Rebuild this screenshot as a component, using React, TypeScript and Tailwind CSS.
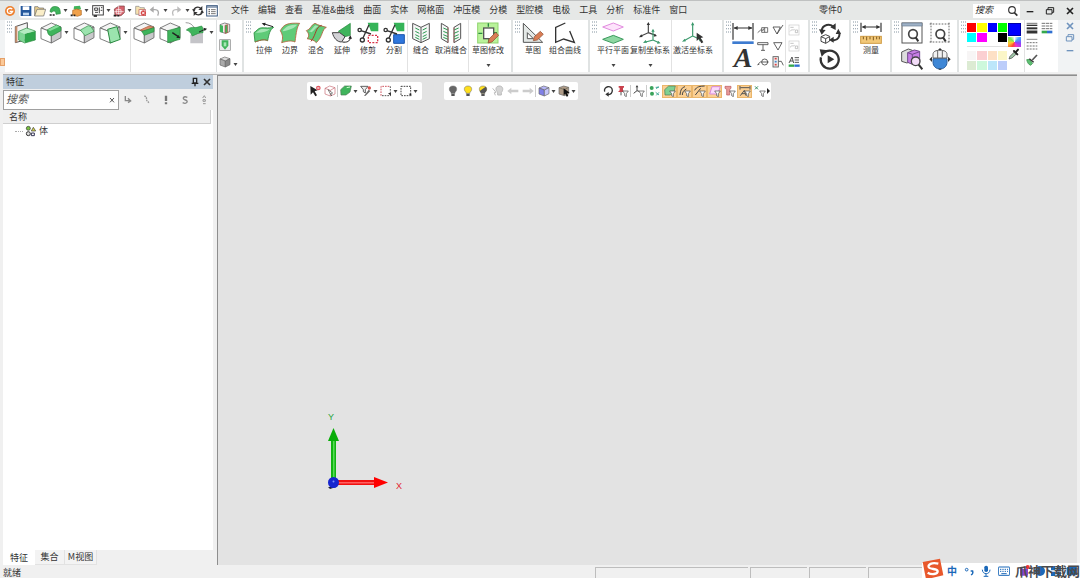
import React from "react";

type Kids = { children?: React.ReactNode };

/* ---------- drawing helpers ---------- */

const G = "#3fb45c";
const GL = "#9be3ae";
const K = "#333";

/* 22px ribbon drawing on a 66 unit grid */
function Big({ children }: Kids) {
  return (
    <svg className="size-[22px] shrink-0" viewBox="0 0 66 66" fill="none" strokeWidth="3" aria-hidden="true">
      {children}
    </svg>
  );
}

/* 12px toolbar drawing on a 36 unit grid */
function Small({ children }: Kids) {
  return (
    <svg className="size-3 shrink-0" viewBox="0 0 36 36" fill="none" strokeWidth="3" aria-hidden="true">
      {children}
    </svg>
  );
}

function Caret() {
  return (
    <svg className="h-[3px] w-[5px] shrink-0" viewBox="0 0 10 6" aria-hidden="true">
      <path d="M1 0h8L5 6z" fill="#444" />
    </svg>
  );
}

function Grip() {
  const cells = [0, 1, 2].flatMap((x) => [0, 1, 2, 3].map((y) => [x, y]));
  return (
    <div className="w-[7px] shrink-0 pt-px pl-0.5">
      <svg className="h-3 w-[5px]" viewBox="0 0 15 36" aria-hidden="true">
        {cells.map(([x, y]) => (
          <rect key={`${x}-${y}`} x={x * 6} y={y * 10 + 1} width="3" height="4" fill="#a4b0ba" />
        ))}
      </svg>
    </div>
  );
}

const Box = ({ top = "#f4f4f4", left = "#fff", right = "#c9c9cb", edge = "#666" }) => (
  <g stroke={edge} strokeLinejoin="round" strokeWidth="2.5">
    <path d="M3 18L34 3l29 12-29 15z" fill={top} />
    <path d="M3 18l31 12v33L3 50z" fill={left} />
    <path d="M34 30l29-15v32L34 63z" fill={right} />
  </g>
);

const Funnel = () => <path d="M17 18h17l-6 8v9l-5-3v-6z" fill="#fff" stroke="#444" strokeWidth="2" />;
const Pointer = () => <path d="M4 3l22 13-9 3 7 12-5 3-7-12-7 7z" fill="#222" />;

/* ---------- ribbon drawings ---------- */

const big = {
  extrude: (
    <Big>
      <path d="M4 14L40 2v50L4 62z" fill="#f3f3f3" stroke="#555" />
      <path d="M4 14v48l6-2V12z" fill="#c98f6b" />
      <path d="M14 28l24-10 26 9-32 9z" fill="#b6ecc2" />
      <path d="M14 28l18 8v26l-18-8z" fill="#7fd695" />
      <path d="M32 36l32-9v27l-32 9z" fill="#2fa64b" />
      <path d="M14 28l24-10 26 9v27l-32 9-18-9z" stroke="#2a8b40" strokeWidth="2" />
    </Big>
  ),
  fillet: (
    <Big>
      <Box />
      <path d="M22 23L50 9l13 7v10L36 41c-10 2-14-8-14-18z" fill={G} stroke="#2a8b40" strokeWidth="2" />
      <path d="M24 23L50 10l8 4-28 13z" fill="#86dd9b" />
    </Big>
  ),
  chamfer: (
    <Big>
      <Box />
      <path d="M22 24L46 11l8 3 9 14-27 13z" fill={GL} stroke="#2a8b40" strokeWidth="2" />
    </Big>
  ),
  draft: (
    <Big>
      <Box />
      <path d="M26 22l28-8 10 38-30 11z" fill={GL} stroke="#2a8b40" />
    </Big>
  ),
  shell: (
    <Big>
      <Box />
      <path d="M22 24L48 12l15 4-29 11z" fill="#d98c6c" stroke="#b0532f" strokeWidth="2" />
      <path d="M26 28l37-11v12L34 40z" fill={G} stroke="#2a8b40" strokeWidth="2" />
    </Big>
  ),
  offset: (
    <Big>
      <Box />
      <path d="M26 26l37-10v36L26 62z" fill={G} stroke="#2a8b40" strokeWidth="2" />
      <path d="M40 32l18 12" stroke="#222" strokeWidth="4" />
      <path d="M64 48l-12 0 6-9z" fill="#222" />
    </Big>
  ),
  replace: (
    <Big>
      <path d="M16 38l38-8v34H16z" fill="#c4c4c8" />
      <path d="M2 2c14 0 20 6 26 16" stroke="#888" strokeWidth="2.5" />
      <path d="M4 24c14-12 26-6 32-8l14-4c6 8 4 14 4 20-14 0-18 4-32 10C18 32 12 26 4 24z" fill={G} stroke="#2a8b40" strokeWidth="2" />
      <path d="M42 30l18-8" stroke="#222" strokeWidth="3" />
      <path d="M66 20l-11-3 4 10z" fill="#222" />
    </Big>
  ),
  pull: (
    <Big>
      <path d="M3 32C12 26 14 20 22 18c12-2 20 2 40-2-12 8-14 20-18 40-12-6-26 0-38 4z" fill="#5fcb78" stroke="#2a8b40" strokeWidth="2.5" />
      <path d="M8 32c10-6 12-11 20-11 8 0 14 1 22 0-8 9-24 12-42 11z" fill="#a5e6b4" />
      <path d="M6 60c12-4 26-10 38-4" stroke="#b5603c" strokeWidth="2.5" />
      <path d="M60 14L34 6" stroke="#222" />
      <path d="M26 4l12-2-3 10z" fill="#222" />
    </Big>
  ),
  boundary: (
    <Big>
      <path d="M4 26C14 6 28 2 62 4 54 14 52 30 48 60 36 54 22 58 8 62 12 48 12 40 4 26z" fill="#5fcb78" stroke="#b5603c" strokeWidth="2.5" />
      <path d="M10 28C20 12 32 8 54 8 48 18 32 24 10 28z" fill="#a5e6b4" />
    </Big>
  ),
  blend: (
    <Big>
      <path d="M4 26c12-2 14-18 26-22 10 6 20 8 34 12-14 6-10 28-30 46-6-8-18-10-28-12 8-6 6-16-2-24z" fill="#5fcb78" stroke="#b5603c" strokeWidth="2.5" />
      <path d="M50 10c-20 6-14 24-32 48" stroke="#a33d2a" strokeWidth="3" />
      <path d="M12 28c10-4 12-14 20-18l8 3c-8 4-12 12-20 18z" fill="#a5e6b4" />
    </Big>
  ),
  extend: (
    <Big>
      <path d="M22 28L58 4v36L42 44z" fill={G} stroke="#2a8b40" strokeWidth="2" />
      <path d="M4 32l22 0 16 12-10 16C18 60 8 48 4 32z" fill="#d2d2d6" stroke="#444" />
      <path d="M34 60c14 2 22-2 24-12" stroke="#222" />
      <path d="M58 40l-6 10h11z" fill="#222" />
    </Big>
  ),
  trim: (
    <Big>
      <path d="M32 2h32v26H42z" fill="#35b458" />
      <rect x="34" y="40" width="28" height="22" stroke="#d8344a" strokeDasharray="6 4" strokeWidth="4" />
      <g stroke={K} strokeWidth="4"><circle cx="8" cy="24" r="5" /><circle cx="16" cy="54" r="6" /><path d="M12 26l30 10M18 48L36 8" /></g>
    </Big>
  ),
  split: (
    <Big>
      <path d="M32 2h32v26H42z" fill="#35b458" />
      <path d="M32 38h32v26H32z" fill="#2f77dd" stroke="#1d56ae" />
      <g stroke={K} strokeWidth="4"><circle cx="8" cy="24" r="5" /><circle cx="16" cy="54" r="6" /><path d="M12 26l30 10M18 48L36 8" /></g>
    </Big>
  ),
  sew: (
    <Big>
      <path d="M8 4l25 12L58 4v46L33 62 8 50z" fill="#f6f6f6" stroke="#555" />
      <path d="M33 16v46" stroke="#555" />
      <path d="M16 18l12 6M16 28l12 6M16 38l12 6M16 46l12 6M50 18l-12 6M50 28l-12 6M50 38l-12 6M50 46l-12 6" stroke="#2a9a50" />
    </Big>
  ),
  unsew: (
    <Big>
      <path d="M4 4l20 12v46L4 50zM62 4L42 16v46l20-12z" fill="#f6f6f6" stroke="#555" />
      <path d="M10 18l14 6M10 28l14 6M10 38l14 6M10 46l14 6M56 18l-14 6M56 28l-14 6M56 38l-14 6M56 46l-14 6" stroke="#2a9a50" />
      <path d="M24 16v46M42 16v46" stroke="#a55" strokeWidth="2" />
    </Big>
  ),
  sketchEdit: (
    <Big>
      <rect x="2" y="3" width="61" height="60" fill="#b9f29a" stroke="#8fd36f" />
      <rect x="20" y="18" width="30" height="32" fill="#fff" stroke="#555" strokeWidth="4" />
      <path d="M34 4v10M4 34h12M36 50v12M50 32h10" stroke="#2a8b40" strokeWidth="4" />
      <path d="M33 63l3-12 20-20 9 9-20 20z" fill="#d97d55" stroke="#8b4a2d" strokeWidth="2" />
    </Big>
  ),
  sketch: (
    <Big>
      <path d="M4 4v57h58z" fill="#e4e8e6" stroke="#555" />
      <path d="M16 32v18h18z" fill="#fff" stroke="#555" />
      <path d="M34 56l3-12 18-16 9 9-18 17z" fill="#d97d55" stroke="#8b4a2d" strokeWidth="2" />
    </Big>
  ),
  curve: (
    <Big>
      <path d="M34 3L5 16v45l24-10 32 10-14-34" stroke="#333" strokeWidth="4" />
    </Big>
  ),
  plane: (
    <Big>
      <path d="M2 15L34 3l30 12-30 12z" fill="#fde3fb" stroke="#e18ade" />
      <path d="M2 52l32-12 30 12-30 12z" fill="#8ed7a2" stroke="#3c9a5d" />
    </Big>
  ),
  copyCsys: (
    <Big>
      <g stroke="#444" strokeWidth="3.5"><path d="M28 6v26L6 42M28 32l22 8" /></g>
      <path d="M28 0l-5 9h10zM0 46l11-1-4-8zM54 42l-7-7-3 9z" fill="#333" />
      <g stroke="#3c9a6d" strokeWidth="3.5"><path d="M42 26v28L20 60M42 54l18 8" /></g>
      <path d="M42 20l-5 9h10zM12 63l12-1-4-8zM65 64l-8-8-3 9z" fill="#3c9a6d" />
    </Big>
  ),
  activeCsys: (
    <Big>
      <g stroke="#3c9a6d" strokeWidth="3.5"><path d="M32 6v36L6 56M32 42l26 12" /></g>
      <path d="M32 0l-5 10h10zM0 59l12-1-4-8zM62 57l-8-8-3 9z" fill="#3c9a6d" />
      <path d="M44 32l20 14-8 2 8 13-6 3-7-13-7 6z" fill="#333" />
    </Big>
  ),
  dimension: (
    <Big>
      <path d="M3 3v50M63 3v50M6 18h54" stroke="#333" strokeWidth="3.5" />
      <path d="M5 18l12-6v12zM61 18l-12-6v12z" fill="#333" />
      <path d="M1 62h64" stroke="#3d7bd0" strokeWidth="8" />
    </Big>
  ),
  regen: (
    <Big>
      <path d="M8 26C10 8 34 2 44 16M40 54c18 4 24-14 20-24" stroke="#333" strokeWidth="6" />
      <path d="M0 22l20 2-12 14zM50 4v20L34 16zM50 36l8-16 8 16zM44 44v18L30 54z" fill="#333" />
      <path d="M6 44l14-6 12 5v14l-12 7-14-6zM6 44l14 6 12-6M20 50v14" stroke="#444" />
    </Big>
  ),
  replay: (
    <Big>
      <path d="M15 14a27 27 0 1 1-9 14" stroke="#333" strokeWidth="7" />
      <path d="M2 4l24 3L8 26z" fill="#333" />
      <path d="M26 22l20 12-20 12z" fill="#333" />
    </Big>
  ),
  measure: (
    <Big>
      <path d="M3 2v28M63 2v28M8 15h50" stroke="#333" strokeWidth="3.5" />
      <path d="M5 15l12-6v12zM61 15l-12-6v12z" fill="#333" />
      <rect x="2" y="43" width="62" height="21" fill="#f3c877" stroke="#cf9c45" />
      <path d="M10 44v8M20 44v11M30 44v8M40 44v11M50 44v8M58 44v8" stroke="#7e5a20" />
    </Big>
  ),
  zoomAll: (
    <Big>
      <rect x="3" y="3" width="60" height="60" fill="#fff" stroke="#555" />
      <path d="M3 3h60v9H3z" fill="#9fb2c7" stroke="#6b7d92" strokeWidth="2" />
      <circle cx="36" cy="36" r="13" stroke="#444" strokeWidth="5" /><path d="M44 46l8 12" stroke="#333" strokeWidth="6" />
    </Big>
  ),
  zoomArea: (
    <Big>
      <path d="M2 6h62M6 2v60M2 60h62M60 2v60" stroke="#666" strokeDasharray="5 4" />
      <circle cx="34" cy="36" r="13" stroke="#444" strokeWidth="5" /><path d="M42 46l8 12" stroke="#333" strokeWidth="6" />
    </Big>
  ),
  viewBox: (
    <Big>
      <path d="M2 12l20-9 12 4v30l-16 8L2 40z" fill="#ddd" stroke="#555" />
      <path d="M20 14l20-8 16 4v30l-22 9-14-6z" fill="#c77de6" stroke="#704a8a" />
      <path d="M20 14l14 5 22-8M34 19v28" stroke="#704a8a" />
      <circle cx="44" cy="40" r="13" fill="#f3dcf8" stroke="#444" strokeWidth="4" /><path d="M53 50l11 14" stroke="#333" strokeWidth="6" />
    </Big>
  ),
  mouse: (
    <Big>
      <path d="M12 32h42v10c0 28-42 28-42 0z" fill="#3e87d6" stroke="#2a5f9e" />
      <path d="M12 30V20c0-10 8-13 21-13s21 3 21 13v10z" fill="#f2f2f2" stroke="#666" />
      <path d="M26 7v23M40 7v23" stroke="#666" />
      <path d="M33 0l-6 6h12zM1 34l8-8v16zM65 34l-8-8v16zM33 66l-6-4h12z" fill="#333" />
    </Big>
  ),
};

/* ---------- small drawings ---------- */

const bulb = (fill: string, half?: boolean) => (
  <Small>
    <path d="M18 3c14 0 13 14 6 19v3H12v-3C5 17 4 3 18 3z" fill={fill} stroke="#666" strokeWidth="1.5" />
    {half && <path d="M8 18L26 5c6 6 3 14-2 17v3H12z" fill="#555" />}
    <path d="M13 26h10v7H13z" fill="#555" />
  </Small>
);
const flat = (fill: string, kids?: React.ReactNode) => (
  <Small>
    <path d="M2 14L14 3h20l-4 18-12 9H3z" fill={fill} stroke="#4c7a54" strokeWidth="2" />
    {kids}
  </Small>
);
const miniBox = (top: string, left: string, right: string) => (
  <Small>
    <g stroke="#666" strokeWidth="2"><path d="M3 9l14-6 16 5-14 7z" fill={top} /><path d="M3 9l16 6v18L3 27z" fill={left} /><path d="M19 15l14-7v18l-14 7z" fill={right} /></g>
  </Small>
);

const sm = {
  logo: <Small><circle cx="18" cy="18" r="15" fill="#ee8130" /><path d="M25 12c-8-5-16 0-15 7 1 8 13 9 16 0H17" stroke="#fff" strokeWidth="4" /></Small>,
  save: <Small><path d="M2 3h32v30H2z" fill="#24589c" /><path d="M8 4h20v11H8z" fill="#fff" /><path d="M9 23h18v8H9z" fill="#bcd4ee" /></Small>,
  open: <Small><path d="M2 33V5h10l3 4h14v5" fill="#e9cf8f" stroke="#666" strokeWidth="2" /><path d="M2 33L9 13h26l-6 20z" fill="#faeec8" stroke="#666" strokeWidth="2" /></Small>,
  part: <Small><path d="M3 20C5 4 15 3 26 6c6 2 8 10 8 20l-13 2c0-8-2-10-8-10l-4 4z" fill={G} stroke="#2a8b40" strokeWidth="2" /><path d="M2 30h6M11 30h6" stroke="#222" strokeWidth="5" /></Small>,
  assembly: <Small><path d="M12 4l18-2 3 10-12 4-10-3z" fill={G} /><path d="M8 16l12-4 14 4v14l-12 4-14-4z" fill="#f0a14a" stroke="#b06a22" strokeWidth="2" /><path d="M2 31h6M11 31h5" stroke="#222" strokeWidth="5" /></Small>,
  drawing: <Small><rect x="2" y="2" width="32" height="28" stroke="#444" strokeWidth="3" /><path d="M8 9h9v7H8zM22 7v18M27 8h4M26 16h5M9 22h9" stroke="#444" strokeWidth="3" /><path d="M5 33h10" stroke="#222" strokeWidth="5" /></Small>,
  cam: <Small><path d="M4 12l14-9h16v20l-10 9H6z" fill="#d6616b" stroke="#7a4040" strokeWidth="2" /><path d="M10 14h14v12H10zM17 3v28M4 20h28" stroke="#fff" strokeWidth="2" /><path d="M2 32h8M13 32h6" stroke="#222" strokeWidth="5" /></Small>,
  folderDel: <Small><path d="M2 28V4h10l3 4h13v20z" fill="#f6e2b0" stroke="#888" strokeWidth="2" /><rect x="12" y="14" width="20" height="18" fill="#fff" stroke="#b55" strokeWidth="2" /><circle cx="25" cy="24" r="8" fill="#d64545" /><path d="M21 20l8 8M29 20l-8 8" stroke="#fff" /></Small>,
  undo: <Small><path d="M26 32c6-12 0-18-8-18H8" stroke="#aaa" strokeWidth="4" /><path d="M2 14L14 4v19z" fill="#aaa" /></Small>,
  redo: <Small><path d="M10 32C4 20 10 14 18 14h10" stroke="#bbb" strokeWidth="4" /><path d="M34 14L22 4v19z" fill="#bbb" /></Small>,
  sync: <Small><path d="M5 17C6 6 20 3 27 11M31 19c-1 11-15 14-22 6" stroke="#333" strokeWidth="4" /><path d="M31 3v13l-12-2zM5 33V20l12 2zM0 13l11 0-5 9zM36 23H25l5-9z" fill="#333" /></Small>,
  list: <Small><rect x="2" y="2" width="32" height="31" fill="#fff" stroke="#3c5a80" strokeWidth="3" /><path d="M2 6h32" stroke="#3c5a80" strokeWidth="3" /><path d="M8 14h3M8 20h3M8 26h3" stroke="#222" strokeWidth="4" /><path d="M15 14h14M15 20h14M15 26h14" stroke="#777" /></Small>,
  shellRed: <Small><path d="M3 8l14-5 15 4v22l-13 5-16-5z" fill="#eee" stroke="#555" strokeWidth="2" /><path d="M3 8l9 3v21l-9-3z" fill={G} /><path d="M18 10l8-2v24l-8 2z" fill={G} stroke="#c44" strokeWidth="2" /></Small>,
  rib: <Small><rect x="2" y="2" width="32" height="32" fill="#e7e9eb" stroke="#888" strokeWidth="2" /><path d="M8 4h20v16l-10 12L8 20z" fill={G} /><path d="M14 10h8v12h-8z" fill="#a5e6b4" /></Small>,
  block: miniBox("#ddd", "#aaa", "#888"),
  pickDel: <Small><Pointer /><circle cx="28" cy="9" r="7" fill="#e0555f" /><path d="M25 6l6 6M31 6l-6 6" stroke="#fff" strokeWidth="2" /></Small>,
  pickBox: <Small><path d="M3 10l14-7 16 5v19l-14 6-16-6zM3 10l16 6 14-8M19 16v17" stroke="#c76b74" strokeWidth="2" /><path d="M12 14l14 10-6 2 3 7z" fill="#fff" stroke="#555" strokeWidth="2" /></Small>,
  face: flat(G, <path d="M20 8l10-2" stroke="#cfc" />),
  filterPen: <Small><path d="M2 4h22l-8 10v10l-6-4v-6z" fill="#eee" stroke="#444" strokeWidth="2.5" /><circle cx="28" cy="9" r="5" fill="#d9534f" /><path d="M12 33L26 14l5 4-14 14z" fill="#666" /></Small>,
  rectRed: <Small><path d="M3 32V4h28" stroke="#cf5560" strokeDasharray="5 3" /><path d="M31 4v28H3" stroke="#555" strokeDasharray="5 3" /><path d="M24 24h9v9" fill="#333" /></Small>,
  rectSel: <Small><rect x="3" y="4" width="29" height="28" stroke="#444" strokeDasharray="5 3" /><path d="M26 26h8v8z" fill="#222" /></Small>,
  bulbOff: bulb("#666"),
  bulbOn: bulb("#ffdf1c"),
  bulbHalf: bulb("#ffe020", true),
  bulbFade: <Small><path d="M22 3c13 0 12 14 6 19v8H17v-8C10 17 9 3 22 3z" fill="#d4d4d4" stroke="#bbb" /><path d="M2 10l10 12-5 1 3 8" stroke="#bbb" /></Small>,
  left: <Small><path d="M1 18l12-10v6h21v8H13v6z" fill="#ccc" /></Small>,
  right: <Small><path d="M35 18L23 8v6H2v8h21v6z" fill="#ccc" /></Small>,
  shade: miniBox("#b6b6f8", "#8080e8", "#c7c7fb"),
  shadePick: <Small><path d="M3 8l14-5 15 4v20l-13 5-16-5z" fill="#b09c88" stroke="#666" strokeWidth="2" /><path d="M3 8l16 6 13-7M19 14v18" stroke="#665" strokeWidth="2" /><path d="M17 10l18 13-8 2 4 8-5 2-4-9-5 4z" fill="#111" /></Small>,
  rotate: <Small><path d="M8 20C3 4 30-2 31 16c0 8-6 13-14 13" stroke="#333" strokeWidth="4" /><path d="M20 21v14l-10-7z" fill="#333" /></Small>,
  pinFilter: <Small><path d="M5 3h16v5h-3v8l5 5H3l5-5V8H5z" fill="#c9414c" /><path d="M12 21v10" stroke="#555" /><Funnel /></Small>,
  axisFilter: <Small><path d="M12 3v14L2 25M12 17l12 4" stroke="#444" strokeWidth="3" /><path d="M12 0l-4 7h8z" fill="#444" /><Funnel /></Small>,
  dots: <Small><circle cx="8" cy="9" r="6" fill="#3aa35b" /><circle cx="9" cy="26" r="6" fill="#3aa35b" /><path d="M20 7h10M22 12l6-8M20 22l10 8M30 22l-8 9" stroke="#4a9" strokeWidth="3" /></Small>,
  faceFilter: flat("#7fd092", <Funnel />),
  curveFilter: <Small><path d="M3 30C5 12 9 8 18 5M10 30c0-8 4-14 12-18" stroke="#444" strokeWidth="3" /><Funnel /></Small>,
  edgeFilter: <Small><path d="M2 16C8 4 18 4 32 3M4 30L20 10" stroke="#444" strokeWidth="3" /><Funnel /></Small>,
  planeFilter: <Small><path d="M9 5h25l-8 22H2z" fill="#fbd9fb" stroke="#d88ad8" /><Funnel /></Small>,
  solidFilter: <Small><path d="M3 4h18v6l-4 3v17H8V13l-5-3z" fill="#e79a9a" stroke="#b9545a" strokeWidth="2" /><Funnel /></Small>,
  dimFilter: <Small><path d="M3 3v11M33 3v11M4 8h28M4 32l12-16 5 16M8 26h10" stroke="#555" strokeWidth="3" /><Funnel /></Small>,
  pointFilter: <Small><path d="M3 4l9 9M12 4l-9 9" stroke="#3a8f63" strokeWidth="3" /><Funnel /></Small>,
  datum: <Small><path d="M2 26l9-8h6M14 11h18v14H14zM23 11v14M17 21l4-8" stroke="#555" strokeWidth="2.5" /></Small>,
  rough: <Small><path d="M3 9h22L15 30zM15 30L33 3" stroke="#444" strokeWidth="2.5" /></Small>,
  tee: <Small><path d="M2 8h31v6H2zM18 14v17M12 31h12" stroke="#444" strokeWidth="2.5" /></Small>,
  tri: <Small><path d="M5 8h25L18 30z" stroke="#444" strokeWidth="2.5" /></Small>,
  balloon: <Small><circle cx="23" cy="18" r="9" stroke="#444" strokeWidth="2.5" /><path d="M2 26l8-8h25M2 26l5-1" stroke="#444" strokeWidth="2.5" /></Small>,
  holes: <Small><rect x="3" y="2" width="16" height="31" fill="#eee" stroke="#555" strokeWidth="2.5" /><path d="M8 8h6" stroke="#d44" strokeWidth="5" /><path d="M8 17h6" stroke="#48c" strokeWidth="5" /><path d="M8 26h6" stroke="#d44" strokeWidth="5" /><path d="M20 16h8l6 12" stroke="#444" strokeWidth="2.5" /></Small>,
  note: <Small><rect x="3" y="3" width="30" height="30" stroke="#ccc" strokeWidth="2" /><path d="M7 10h10M6 22c6-8 10-2 14-6M22 18h7v8h-7z" stroke="#bbb" strokeWidth="2.5" /></Small>,
  style: <Small><path d="M3 21L12 3l5 18M6 15h9M20 5h13M20 12h13M20 19h13" stroke="#333" strokeWidth="2.5" /><path d="M2 29h16" stroke="#35a84c" strokeWidth="7" /><path d="M19 29h16" stroke="#2f6fd0" strokeWidth="7" /></Small>,
  weight: <Small><path d="M2 4h32" stroke="#333" strokeWidth="2" /><path d="M2 10h32" stroke="#333" strokeWidth="4" /><path d="M2 19h32" stroke="#333" strokeWidth="6" /><path d="M2 30h32" stroke="#333" strokeWidth="9" /></Small>,
  lineColor: <Small><path d="M2 4h32M2 12h32M2 20h32" stroke="#555" strokeWidth="2.5" strokeDasharray="10 2" /><path d="M2 30h16" stroke="#35a84c" strokeWidth="8" /><path d="M18 30h16" stroke="#2f6fd0" strokeWidth="8" /></Small>,
  dash: <Small><path d="M2 4h32" stroke="#555" strokeWidth="2" /><path d="M2 14h32M2 24h32M2 33h32" stroke="#555" strokeWidth="2.5" strokeDasharray="6 3" /></Small>,
  brush: <Small><path d="M33 3L19 18" stroke="#555" strokeWidth="5" /><path d="M2 17l8-1 10 12-6 6C8 32 4 26 2 17z" fill="#5fbf74" stroke="#2a8b40" strokeWidth="2" /><path d="M10 14l13 11" stroke="#333" strokeWidth="4" /></Small>,
  dropper: <Small><path d="M3 33l3-8L20 11l6 6-14 13z" fill="#9fc7a8" stroke="#444" strokeWidth="2" /><path d="M18 9l10 10M23 13l7-8" stroke="#222" strokeWidth="6" strokeLinecap="round" /></Small>,
  min: <Small><path d="M8 20h20" stroke="currentColor" strokeWidth="4" /></Small>,
  restore: <Small><path d="M7 14h17v13H7zM12 14V8h17v14h-5" stroke="currentColor" strokeWidth="3" /></Small>,
  close: <Small><path d="M9 9l18 18M27 9L9 27" stroke="currentColor" strokeWidth="5" /></Small>,
  search: <Small><circle cx="15" cy="15" r="10" stroke="#333" strokeWidth="3.5" /><path d="M22 23l9 9" stroke="#333" strokeWidth="5" /></Small>,
  pushpin: <Small><path d="M13 7h10v14H13zM8 22h20M18 22v9" stroke="#222" strokeWidth="4" /></Small>,
  t1: <Small><path d="M10 6v14h14M18 13l8 8-8 5" stroke="#888" strokeWidth="4" /></Small>,
  t2: <Small><path d="M10 6c12 4 2 10 10 16l5 6" stroke="#999" strokeWidth="4" strokeDasharray="5 2" /></Small>,
  t3: <Small><path d="M18 5v16M18 25v6" stroke="#777" strokeWidth="7" /></Small>,
  t4: <Small><path d="M25 10c-12-5-17 5-6 8s4 14-8 8" stroke="#888" strokeWidth="4" /></Small>,
  t5: <Small><path d="M14 12l5-7 4 7M15 17h7v5h-7zM15 29h8" stroke="#999" strokeWidth="3" /></Small>,
  body: <Small><circle cx="10" cy="10" r="6" fill="#7ac142" stroke="#333" strokeWidth="2" /><circle cx="10" cy="26" r="6" fill="#ddd" stroke="#333" /><path d="M19 18l6-11 7 11z" fill="#d8d84a" stroke="#333" strokeWidth="2" /><path d="M19 24h9v8h-9z" fill="#fff" stroke="#335" /></Small>,
};

/* ---------- layout pieces ---------- */

function IconButton({ label, wide, on, children }: Kids & { label: string; wide?: boolean; on?: boolean }) {
  return (
    <button
      type="button"
      aria-label={label}
      className={`flex shrink-0 items-center justify-center ${wide ? "w-[26px] pt-0.5" : on ? "h-[13px] w-[15px] border border-[#eab66b] bg-[#fbcf93]" : "w-[15px]"}`}
    >
      {children}
    </button>
  );
}

function Group({ children }: Kids) {
  return <section className="flex shrink-0 border-r-2 border-[#e0e3e3] bg-white">{children}</section>;
}

const Sep = () => <i className="w-px shrink-0 self-stretch bg-[#e2e2e2]" />;

const toolWidth = { sm: "w-[26px]", md: "w-8", lg: "w-[38px]" };

function Tool({ icon, text, size = "sm", menu }: { icon: React.ReactNode; text: string; size?: "sm" | "md" | "lg"; menu?: boolean }) {
  return (
    <button type="button" className={`flex shrink-0 flex-col items-center pt-0.5 ${toolWidth[size]}`}>
      {icon}
      <span className="text-[8px] leading-3 whitespace-nowrap">{text}</span>
      {menu && <span className="pt-2"><Caret /></span>}
    </button>
  );
}

const menus = ["文件", "编辑", "查看", "基准&曲线", "曲面", "实体", "网格面", "冲压模", "分模", "型腔模", "电极", "工具", "分析", "标准件", "窗口"];

function TitleBar() {
  return (
    <header className="flex h-5 shrink-0 items-center border-t border-[#bfc1c1] bg-[#e6e8e7]">
      <span className="flex w-[19px] justify-center">{sm.logo}</span>
      <div className="flex h-[15px] w-[200px] shrink-0 items-center justify-between rounded-sm bg-white px-px">
        {sm.save}{sm.open}{sm.part}<Caret />{sm.assembly}<Caret />{sm.drawing}<Caret />{sm.cam}<Caret />
        {sm.folderDel}{sm.undo}<Caret />{sm.redo}<Caret />{sm.sync}{sm.list}
      </div>
      <nav className="flex gap-[9px] pb-px pl-3 whitespace-nowrap">
        {menus.map((m) => <button type="button" key={m}>{m}</button>)}
      </nav>
      <h1 className="ml-auto pr-[131px] pb-px whitespace-nowrap">零件0</h1>
      <label className="flex h-[14px] w-[47px] items-center bg-white pl-0.5">
        <input aria-label="搜索命令" placeholder="搜索" className="w-8 pb-px italic outline-none placeholder:text-[#222]" />
        {sm.search}
      </label>
      <div className="flex gap-2 pr-1 pl-1 text-[#222]">
        <button type="button" aria-label="最小化">{sm.min}</button>
        <button type="button" aria-label="还原">{sm.restore}</button>
        <button type="button" aria-label="关闭">{sm.close}</button>
      </div>
    </header>
  );
}

const swatches = [
  "bg-[#ff0000]", "bg-[#ffff00]", "bg-[#0000ff]", "bg-[#00ff00]",
  "bg-[#00ffff]", "bg-[#ff00ff]", "bg-white", "bg-black",
];
const pastels = [
  "bg-[#f7f5f5]", "bg-[#fbcfd1]", "bg-[#fde0c5]", "bg-[#fbf6c8]",
  "bg-[#dcebd3]", "bg-[#cdf8dc]", "bg-[#bce6fa]", "bg-[#bccdfa]",
];

function Ribbon() {
  return (
    <div className="flex h-[52px] shrink-0 bg-[#f1f3f4]">
      <div className="flex w-[5px] shrink-0 flex-col justify-end pb-1.5">
        <span className="h-2 border border-[#e5a068] bg-[#fbc998]" />
      </div>
      <section className="flex shrink-0 border-r border-[#dcdfe0] bg-white">
        <Grip />
        <div className="flex h-6">
          <IconButton wide label="造型">{big.extrude}</IconButton>
          <IconButton wide label="圆角">{big.fillet}</IconButton>
          <span className="flex w-[7px] items-center"><Caret /></span>
          <IconButton wide label="倒角">{big.chamfer}</IconButton>
          <IconButton wide label="拔模">{big.draft}</IconButton>
          <span className="flex w-[7px] items-center"><Caret /></span>
        </div>
        <Sep />
        <div className="flex h-6">
          <IconButton wide label="面偏移">{big.shell}</IconButton>
          <IconButton wide label="移动面">{big.offset}</IconButton>
          <IconButton wide label="替换面">{big.replace}</IconButton>
          <span className="flex w-[7px] items-center"><Caret /></span>
        </div>
      </section>
      <section className="flex w-[27px] shrink-0 border-r-2 border-[#e0e3e3] bg-white">
        <div className="flex w-4 flex-col items-center justify-between pt-0.5 pb-1">
          <button type="button" aria-label="抽壳">{sm.shellRed}</button>
          <button type="button" aria-label="加筋">{sm.rib}</button>
          <button type="button" aria-label="六面体">{sm.block}</button>
        </div>
        <span className="self-end pb-1.5"><Caret /></span>
      </section>
      <Group>
        <Grip />
        <Tool icon={big.pull} text="拉伸" />
        <Tool icon={big.boundary} text="边界" />
        <Tool icon={big.blend} text="混合" />
        <Tool icon={big.extend} text="延伸" />
        <Tool icon={big.trim} text="修剪" />
        <Tool icon={big.split} text="分割" />
        <Sep />
        <Tool icon={big.sew} text="缝合" />
        <div className="flex px-px"><Tool size="md" icon={big.unsew} text="取消缝合" /></div>
        <Sep />
        <div className="flex pr-[7px] pl-[3px]"><Tool size="md" menu icon={big.sketchEdit} text="草图修改" /></div>
      </Group>
      <Group>
        <Grip />
        <Tool icon={big.sketch} text="草图" />
        <div className="flex pr-1"><Tool size="lg" icon={big.curve} text="组合曲线" /></div>
      </Group>
      <Group>
        <Grip />
        <Tool size="md" menu icon={big.plane} text="平行平面" />
        <div className="flex px-0.5"><Tool size="lg" menu icon={big.copyCsys} text="复制坐标系" /></div>
        <Sep />
        <div className="flex pr-2.5 pl-0.5"><Tool size="lg" icon={big.activeCsys} text="激活坐标系" /></div>
      </Group>
      <Group>
        <Grip />
        <div className="flex w-6 flex-col items-center pt-0.5">
          <button type="button" aria-label="快速标注">{big.dimension}</button>
          <button type="button" aria-label="文字" className="font-['Liberation_Serif',serif] text-[28px] leading-7 font-bold italic">A</button>
        </div>
        <div className="grid w-[30px] grid-cols-2 place-items-center py-0.5">
          {sm.datum}{sm.rough}{sm.tee}{sm.tri}{sm.balloon}{sm.holes}
        </div>
        <Sep />
        <div className="flex w-[22px] flex-col justify-around py-0.5 pl-0.5">
          {sm.note}{sm.note}{sm.style}
        </div>
      </Group>
      <Group>
        <Grip />
        <div className="flex w-8 flex-col justify-between py-0.5 pl-0.5">
          <button type="button" aria-label="重新生成">{big.regen}</button>
          <button type="button" aria-label="回放">{big.replay}</button>
        </div>
      </Group>
      <Group>
        <Grip />
        <div className="flex w-8"><Tool icon={big.measure} text="测量" /></div>
      </Group>
      <Group>
        <Grip />
        <div className="grid w-[58px] grid-cols-2 content-between py-0.5 pl-0.5">
          <button type="button" aria-label="整图缩放">{big.zoomAll}</button>
          <button type="button" aria-label="窗口缩放">{big.zoomArea}</button>
          <button type="button" aria-label="视图查看">{big.viewBox}</button>
          <button type="button" aria-label="鼠标设置">{big.mouse}</button>
        </div>
      </Group>
      <section className="flex shrink-0 bg-white">
        <Grip />
        <div className="flex w-[42px] flex-col justify-between pt-[3px] pb-0.5 pl-px">
          <div className="grid w-10 grid-cols-4 gap-px">
            {swatches.map((c) => <button type="button" key={c} aria-label="颜色" className={`h-[9px] ${c}`} />)}
          </div>
          <i className="h-px bg-[#e0e0e0]" />
          <div className="grid w-10 grid-cols-4 gap-px">
            {pastels.map((c) => <button type="button" key={c} aria-label="浅色" className={`h-[9px] ${c}`} />)}
          </div>
        </div>
        <div className="flex w-4 flex-col gap-px pt-[3px]">
          <i className="h-[13px] w-[13px] bg-[#0000ff] outline-1 -outline-offset-1 outline-[#0000a8]" />
          <i className="h-2.5 w-[13px] bg-[conic-gradient(#fff,#4af,#84f,#e3c,#f43,#fc3,#7e5,#fff)]" />
          {sm.dropper}
        </div>
        <Sep />
        <div className="grid w-[30px] grid-cols-2 content-start gap-y-1 pt-0.5 pl-px">
          {sm.weight}{sm.lineColor}{sm.dash}<span />{sm.brush}
        </div>
        <span className="w-[3px]" />
      </section>
      <div className="ml-auto flex w-5 shrink-0 flex-col items-center text-[#6f93bd]">
        <button type="button" aria-label="关闭文档">{sm.close}</button>
        <button type="button" aria-label="还原文档">{sm.restore}</button>
        <button type="button" aria-label="最小化文档">{sm.min}</button>
      </div>
    </div>
  );
}

function ManagerPanel() {
  return (
    <aside className="flex w-[217px] shrink-0 flex-col pr-1 pl-[3px]">
      <div className="flex h-[14px] shrink-0 items-center bg-[#bfcedd] pl-[3px]">
        <h2 className="flex-1">特征</h2>
        <button type="button" aria-label="固定">{sm.pushpin}</button>
        <button type="button" aria-label="关闭面板">{sm.close}</button>
      </div>
      <div className="flex h-[21px] shrink-0 items-center">
        <label className="flex h-5 w-[116px] shrink-0 items-center border border-[#a0a0a0] bg-white pl-0.5">
          <input aria-label="搜索特征" placeholder="搜索" className="w-[100px] pb-1 text-[11px] italic outline-none placeholder:text-[#555]" />
          <svg className="size-3" viewBox="0 0 36 36" aria-hidden="true"><path d="M12 12l12 13M24 12L12 25" stroke="#555" strokeWidth="3" /></svg>
        </label>
        <div className="flex flex-1 justify-around">{sm.t1}{sm.t2}{sm.t3}{sm.t4}{sm.t5}</div>
      </div>
      <div className="flex min-h-0 flex-1 flex-col bg-white">
        <div className="mr-0.5 flex h-[14px] items-center border-r border-b border-[#cfcfcf] bg-[#efefef] pl-1.5">名称</div>
        <div className="flex h-[14px] items-center gap-0.5 pl-3">
          <i className="w-2 border-t border-dotted border-[#aaa]" />
          {sm.body}
          <span>体</span>
        </div>
      </div>
      <div role="tablist" className="flex h-[15px] shrink-0">
        <button type="button" role="tab" aria-selected="true" className="w-8 bg-white">特征</button>
        <button type="button" role="tab" aria-selected="false" className="w-[30px] border-r border-b border-[#e2e2e2] bg-[#f3f3f3]">集合</button>
        <button type="button" role="tab" aria-selected="false" className="w-8 border-r border-b border-[#e2e2e2] bg-[#f3f3f3] whitespace-nowrap">M视图</button>
      </div>
    </aside>
  );
}

const Bar = ({ children }: Kids) => (
  <div role="toolbar" className="flex h-[18px] shrink-0 items-center rounded-xs bg-white">{children}</div>
);
const TinySep = () => <i className="h-3 w-px shrink-0 bg-[#ccc]" />;
const Drop = () => <span className="flex w-[5px] shrink-0 justify-center"><Caret /></span>;

function Viewport() {
  return (
    <main className="mr-[3px] flex min-w-0 flex-1 flex-col justify-between border-t border-l border-[#8e8e8e] bg-[#e3e3e3] pt-1.5 pl-[89px]">
      <div className="flex gap-[22px]">
        <Bar>
          <IconButton label="取消选择">{sm.pickDel}</IconButton>
          <IconButton label="拾取造型">{sm.pickBox}</IconButton>
          <TinySep />
          <IconButton label="拾取面">{sm.face}</IconButton><Drop />
          <IconButton label="过滤器">{sm.filterPen}</IconButton><Drop />
          <IconButton label="框选">{sm.rectRed}</IconButton><Drop />
          <IconButton label="区域选择">{sm.rectSel}</IconButton><Drop />
          <span className="w-1" />
        </Bar>
        <Bar>
          <span className="w-px" />
          <IconButton label="隐藏">{sm.bulbOff}</IconButton>
          <IconButton label="显示">{sm.bulbOn}</IconButton>
          <IconButton label="反转显示">{sm.bulbHalf}</IconButton>
          <IconButton label="恢复">{sm.bulbFade}</IconButton>
          <IconButton label="上一视图">{sm.left}</IconButton>
          <IconButton label="下一视图">{sm.right}</IconButton>
          <TinySep />
          <IconButton label="着色">{sm.shade}</IconButton><Drop />
          <IconButton label="显示模式">{sm.shadePick}</IconButton><Drop />
          <span className="w-0.5" />
        </Bar>
        <Bar>
          <IconButton label="重置">{sm.rotate}</IconButton>
          <IconButton label="固定过滤">{sm.pinFilter}</IconButton>
          <TinySep />
          <IconButton label="坐标过滤">{sm.axisFilter}</IconButton>
          <TinySep />
          <IconButton label="全部过滤">{sm.dots}</IconButton>
          <IconButton on label="面过滤">{sm.faceFilter}</IconButton>
          <IconButton on label="曲线过滤">{sm.curveFilter}</IconButton>
          <IconButton on label="边过滤">{sm.edgeFilter}</IconButton>
          <IconButton on label="基准面过滤">{sm.planeFilter}</IconButton>
          <IconButton label="造型过滤">{sm.solidFilter}</IconButton>
          <IconButton on label="标注过滤">{sm.dimFilter}</IconButton>
          <IconButton label="点过滤">{sm.pointFilter}</IconButton>
          <svg className="h-1.5 w-1" viewBox="0 0 4 6" aria-hidden="true"><path d="M0 0l3 3-3 3z" fill="#222" /></svg>
        </Bar>
      </div>
      <svg className="mb-[70px] ml-[17px] h-[86px] w-20" viewBox="0 0 80 86" aria-label="坐标轴">
        <text x="4" y="11" fontSize="9" fontFamily="Liberation Sans, sans-serif" fill="#27a53c">Y</text>
        <path d="M4 78h8l-6 2z" fill="#223" />
        <path d="M7 28h5v44H7z" fill="#12b312" />
        <path d="M9 28h1.500v44H9z" fill="#57dd57" />
        <path d="M9.500 19L15 32H4z" fill="#08ad08" />
        <path d="M14 71h38v5H14z" fill="#f01010" />
        <path d="M14 73h38v1.500H14z" fill="#ff6060" />
        <path d="M64 73.500L50 68v11z" fill="#f00" />
        <circle cx="9.500" cy="73.500" r="5.500" fill="#1726cf" />
        <circle cx="9.500" cy="72.500" r="1" fill="#7e90ff" />
        <text x="72" y="80" fontSize="9" fontFamily="Liberation Sans, sans-serif" fill="#e2252f">X</text>
      </svg>
    </main>
  );
}

function ImeBar() {
  return (
    <div className="absolute right-0 bottom-0 flex h-[15px] w-[158px] items-center bg-white text-[#1b68b8]">
      <svg className="-mt-1 h-[22px] w-[22px] shrink-0" viewBox="0 0 66 66" aria-hidden="true">
        <path d="M2 12L54 2l10 50-52 12z" fill="#e8582c" />
        <path d="M49 17C28 12 18 20 20 27c3 9 27 3 27 13 0 10-20 10-30 4" fill="none" stroke="#fff" strokeWidth="7" />
      </svg>
      <span className="w-[14px] shrink-0 pl-[3px] text-[10px] font-bold">中</span>
      <svg className="ml-1.5 size-3 shrink-0" viewBox="0 0 36 36" aria-hidden="true"><circle cx="8" cy="14" r="4" fill="none" stroke="#1b68b8" strokeWidth="3" /><path d="M20 18h6c2 6-1 10-5 12" fill="none" stroke="#1b68b8" strokeWidth="4" /></svg>
      <svg className="ml-1 size-3 shrink-0" viewBox="0 0 36 36" fill="none" aria-hidden="true"><rect x="13" y="2" width="11" height="19" rx="5" fill="#1b68b8" /><path d="M7 14c0 16 23 16 23 0M18 27v7M11 34h14" stroke="#1b68b8" strokeWidth="3" /></svg>
      <svg className="ml-1.5 size-3 shrink-0" viewBox="0 0 36 36" fill="none" aria-hidden="true"><rect x="1" y="6" width="34" height="25" rx="2" stroke="#1b68b8" strokeWidth="3" /><path d="M6 13h24M6 19h24" stroke="#1b68b8" strokeWidth="3" strokeDasharray="4 3" /><path d="M10 26h16" stroke="#1b68b8" strokeWidth="3" /></svg>
      <div className="relative ml-1.5 flex flex-1 items-center justify-around">
        <svg className="size-3" viewBox="0 0 36 36" aria-hidden="true"><path d="M6 8l12 4 12-4v24H6z" fill="#8b45c8" /><circle cx="29" cy="6" r="6" fill="#e33" /></svg>
        <svg className="size-3" viewBox="0 0 36 36" aria-hidden="true"><circle cx="18" cy="18" r="15" fill="#1b68b8" /></svg>
        <svg className="size-3" viewBox="0 0 36 36" aria-hidden="true"><path d="M3 3h13v13H3zM20 3h13v13H20zM3 20h13v13H3zM20 20h13v13H20z" fill="#1b68b8" /></svg>
        <svg className="size-3" viewBox="0 0 36 36" aria-hidden="true"><rect x="2" y="6" width="32" height="25" rx="4" fill="#1b68b8" /></svg>
        <span className="absolute right-0 text-[13px] leading-4 font-bold whitespace-nowrap text-[#4a4a4c]">爪神下载网</span>
      </div>
    </div>
  );
}

function StatusBar() {
  return (
    <footer className="relative flex h-[13px] shrink-0 items-end">
      <span className="flex-1 pl-[3px] leading-[10px]">就绪</span>
      <i className="mr-0.5 h-[11px] w-[153px] border-t border-l border-[#bdbdbd]" />
      <i className="mr-0.5 h-[11px] w-[57px] border-t border-l border-[#bdbdbd]" />
      <i className="mr-0.5 h-[11px] w-[57px] border-t border-l border-[#bdbdbd]" />
      <i className="h-[11px] w-[212px] border-t border-l border-[#bdbdbd]" />
      <ImeBar />
    </footer>
  );
}

export default function App() {
  return (
    <div className="flex h-screen flex-col overflow-hidden bg-[#f0f0f0] font-['Noto_Sans_CJK_SC',sans-serif] text-[9px] leading-3 text-[#333]">
      <TitleBar />
      <Ribbon />
      <div className="mx-[3px] mt-0.5 h-px shrink-0 bg-[#b4b4b4]" />
      <div className="flex min-h-0 flex-1">
        <ManagerPanel />
        <Viewport />
      </div>
      <StatusBar />
    </div>
  );
}
